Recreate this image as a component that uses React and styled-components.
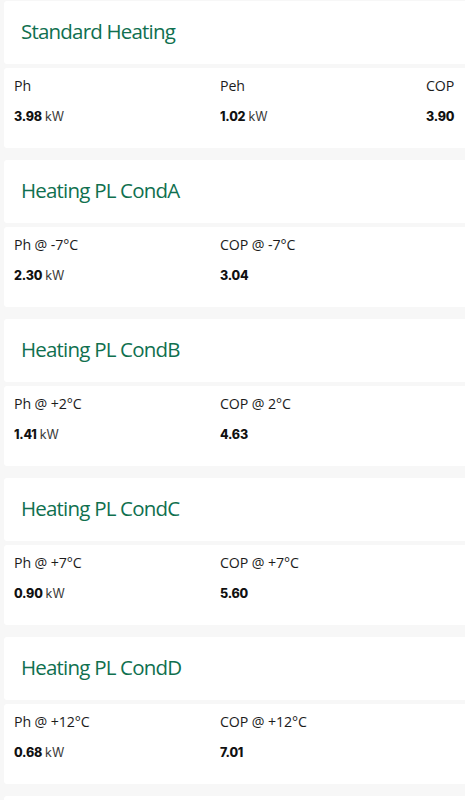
import React from "react";
import styled, { createGlobalStyle } from "styled-components";

const Global = createGlobalStyle`
  html, body { margin: 0; padding: 0; background: #f7f7f7; overflow-x: hidden; }
  body { font-family: "Open Sans", "Noto Sans", sans-serif; color: #1c1c1c; }
`;

const Page = styled.main`
  display: flex;
  flex-direction: column;
  gap: 12px;
  padding: 1px 0 0 4px;
`;

const Card = styled.section`
  display: flex;
  flex-direction: column;
  gap: 4px;
  width: 660px;
`;

const Header = styled.header`
  height: 63px;
  background: #fff;
  border-radius: 3px;
  display: flex;
  align-items: center;
  padding-left: 17px;
  box-sizing: border-box;
`;

const Title = styled.h2`
  margin: 0 0 4px;
  font-family: "Open Sans", "Noto Sans", sans-serif;
  font-weight: 400;
  font-size: 20.5px;
  letter-spacing: -0.8px;
  color: #10704f;
`;

const Body = styled.div`
  height: 80px;
  box-sizing: border-box;
  background: #fff;
  border-radius: 3px;
  padding: 8px 0 0 10px;
  display: grid;
  grid-template-columns: repeat(3, 206px);
  align-content: start;
`;

const Metric = styled.div`
  display: flex;
  flex-direction: column;
  gap: 13px;
`;

const Label = styled.div`
  font-size: 14.2px;
  line-height: 20px;
  letter-spacing: -0.1px;
  color: #1c1c1c;
`;

const Value = styled.div`
  font-family: Inter, Roboto, sans-serif;
  font-size: 12.5px;
  line-height: 16px;
  color: #111;
  b { font-weight: 800; letter-spacing: -0.2px; }
  span { font-weight: 400; color: #3a3a3a; margin-left: 3px; }
`;

const data = [
  {
    title: "Standard Heating",
    metrics: [
      { label: "Ph", value: "3.98", unit: "kW" },
      { label: "Peh", value: "1.02", unit: "kW" },
      { label: "COP", value: "3.90" },
    ],
  },
  {
    title: "Heating PL CondA",
    metrics: [
      { label: "Ph @ -7°C", value: "2.30", unit: "kW" },
      { label: "COP @ -7°C", value: "3.04" },
    ],
  },
  {
    title: "Heating PL CondB",
    metrics: [
      { label: "Ph @ +2°C", value: "1.41", unit: "kW" },
      { label: "COP @ 2°C", value: "4.63" },
    ],
  },
  {
    title: "Heating PL CondC",
    metrics: [
      { label: "Ph @ +7°C", value: "0.90", unit: "kW" },
      { label: "COP @ +7°C", value: "5.60" },
    ],
  },
  {
    title: "Heating PL CondD",
    metrics: [
      { label: "Ph @ +12°C", value: "0.68", unit: "kW" },
      { label: "COP @ +12°C", value: "7.01" },
    ],
  },
  { title: "", metrics: [] },
];

export default function App() {
  return (
    <>
      <Global />
      <Page>
        {data.map((c, i) => (
          <Card key={i}>
            <Header>
              {c.title && <Title>{c.title}</Title>}
            </Header>
            <Body>
              {c.metrics.map((m) => (
                <Metric key={m.label}>
                  <Label>{m.label}</Label>
                  <Value>
                    <b>{m.value}</b>
                    {m.unit && <span>{m.unit}</span>}
                  </Value>
                </Metric>
              ))}
            </Body>
          </Card>
        ))}
      </Page>
    </>
  );
}
